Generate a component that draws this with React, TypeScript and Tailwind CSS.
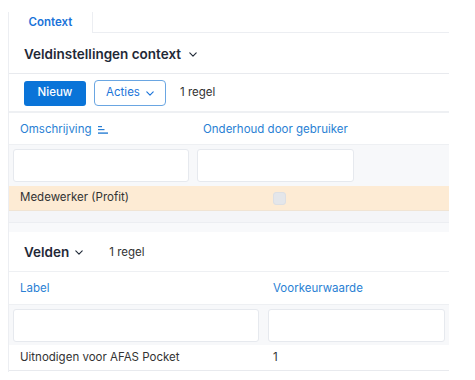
import React from 'react';

const Chevron: React.FC<{ className?: string }> = ({ className }) => (
  <svg viewBox="0 0 10 6" className={className} fill="none" stroke="currentColor" strokeWidth="1.4" strokeLinecap="round" strokeLinejoin="round">
    <path d="M1 1l4 4 4-4" />
  </svg>
);

const SortIcon: React.FC = () => (
  <svg viewBox="0 0 10 8" className="w-[10px] h-[8px] text-[#2a7fd4]" fill="currentColor">
    <rect x="0" y="0" width="4" height="1.2" />
    <rect x="0" y="3" width="6.5" height="1.2" />
    <rect x="0" y="6.4" width="10" height="1.4" />
  </svg>
);

const FilterInput: React.FC = () => (
  <div className="h-[33px] bg-white border border-[#e6e9ee] rounded-[3px]" />
);

const App: React.FC = () => {
  return (
    <div className="w-[475px] h-[380px] bg-white overflow-hidden" style={{ fontFamily: 'Inter, "Noto Sans", sans-serif' }}>
      <div className="ml-2 mt-3 w-[441px] border-l border-[#eceef2] h-[360px]">
        {/* tabs */}
        <div className="flex h-[21px]">
          <div className="w-[84px] border-r border-[#eceef2] flex items-center justify-center pt-[1px] text-[11.5px] font-semibold text-[#1a73d9]">
            Context
          </div>
          <div className="flex-1 border-b border-[#eceef2]" />
        </div>

        {/* title */}
        <div className="h-[41px] flex items-center pl-[15px] pt-[2px] border-b border-[#e8eaee]">
          <span className="text-[13.5px] font-semibold text-[#1f2937]">Veldinstellingen context</span>
          <Chevron className="w-[8px] h-[5px] ml-[8px] text-[#1f2937]" />
        </div>

        {/* toolbar */}
        <div className="h-[39px] flex items-center pl-[15px] pt-[1px] border-b-2 border-[#eef0f3]">
          <button className="w-[62px] h-[25px] bg-[#0a74d8] rounded-[3px] text-white text-[11.5px] font-medium">Nieuw</button>
          <button className="ml-[8px] w-[72px] h-[26px] border border-[#6aa6e2] rounded-[4px] text-[#1a73d9] text-[11.5px] flex items-center justify-center gap-[6px]">
            Acties
            <Chevron className="w-[8px] h-[5px]" />
          </button>
          <span className="ml-[14px] text-[11.5px] text-[#333]">1 regel</span>
        </div>

        {/* table 1 header */}
        <div className="grid grid-cols-[184px_165px_1fr] h-[32px] items-center pt-[2px] border-b border-[#eef0f3] text-[11.5px] text-[#2a7fd4]">
          <div className="pl-[11px] flex items-center gap-[7px]">
            Omschrijving <SortIcon />
          </div>
          <div className="pl-[10px]">Onderhoud door gebruiker</div>
          <div />
        </div>
        <div className="grid grid-cols-[184px_165px_1fr] h-[41px] items-center bg-[#f7f8fa]">
          <div className="px-[4px]"><FilterInput /></div>
          <div className="px-[4px]"><FilterInput /></div>
          <div />
        </div>
        <div className="grid grid-cols-[184px_165px_1fr] h-[25px] items-center bg-[#fdebd4] border-b border-[#f0e4d4] text-[11.5px] text-[#333]">
          <div className="pl-[11px]">Medewerker (Profit)</div>
          <div className="pl-[80px]">
            <div className="w-[13px] h-[13px] rounded-[3px] bg-[#e4e6ea] border border-[#dcdfe4]" />
          </div>
          <div />
        </div>
        <div className="h-[21px] bg-[#f8f9fb] flex flex-col">
          <div className="h-[12px] bg-[#f4f5f8] border-b border-[#eceef2]" />
        </div>

        {/* section 2 */}
        <div className="h-[40px] flex items-center pl-[15px] pt-[2px] border-b border-[#eef0f3]">
          <span className="text-[13.5px] font-semibold text-[#1f2937]">Velden</span>
          <Chevron className="w-[8px] h-[5px] ml-[6px] text-[#1f2937]" />
          <span className="ml-[26px] text-[11.5px] text-[#333]">1 regel</span>
        </div>
        <div className="grid grid-cols-[254px_1fr] h-[33px] items-center pt-[1px] border-b border-[#eef0f3] text-[11.5px] text-[#2a7fd4]">
          <div className="pl-[11px]">Label</div>
          <div className="pl-[10px]">Voorkeurwaarde</div>
        </div>
        <div className="grid grid-cols-[254px_1fr] h-[40px] items-center bg-[#f7f8fa]">
          <div className="px-[4px]"><FilterInput /></div>
          <div className="pl-[5px] pr-[4px]"><FilterInput /></div>
        </div>
        <div className="grid grid-cols-[254px_1fr] h-[26px] items-center border-b border-[#e8eaee] text-[11.5px] text-[#333]">
          <div className="pl-[11px]">Uitnodigen voor AFAS Pocket</div>
          <div className="pl-[10px]">1</div>
        </div>
      </div>
    </div>
  );
};

export default App;
